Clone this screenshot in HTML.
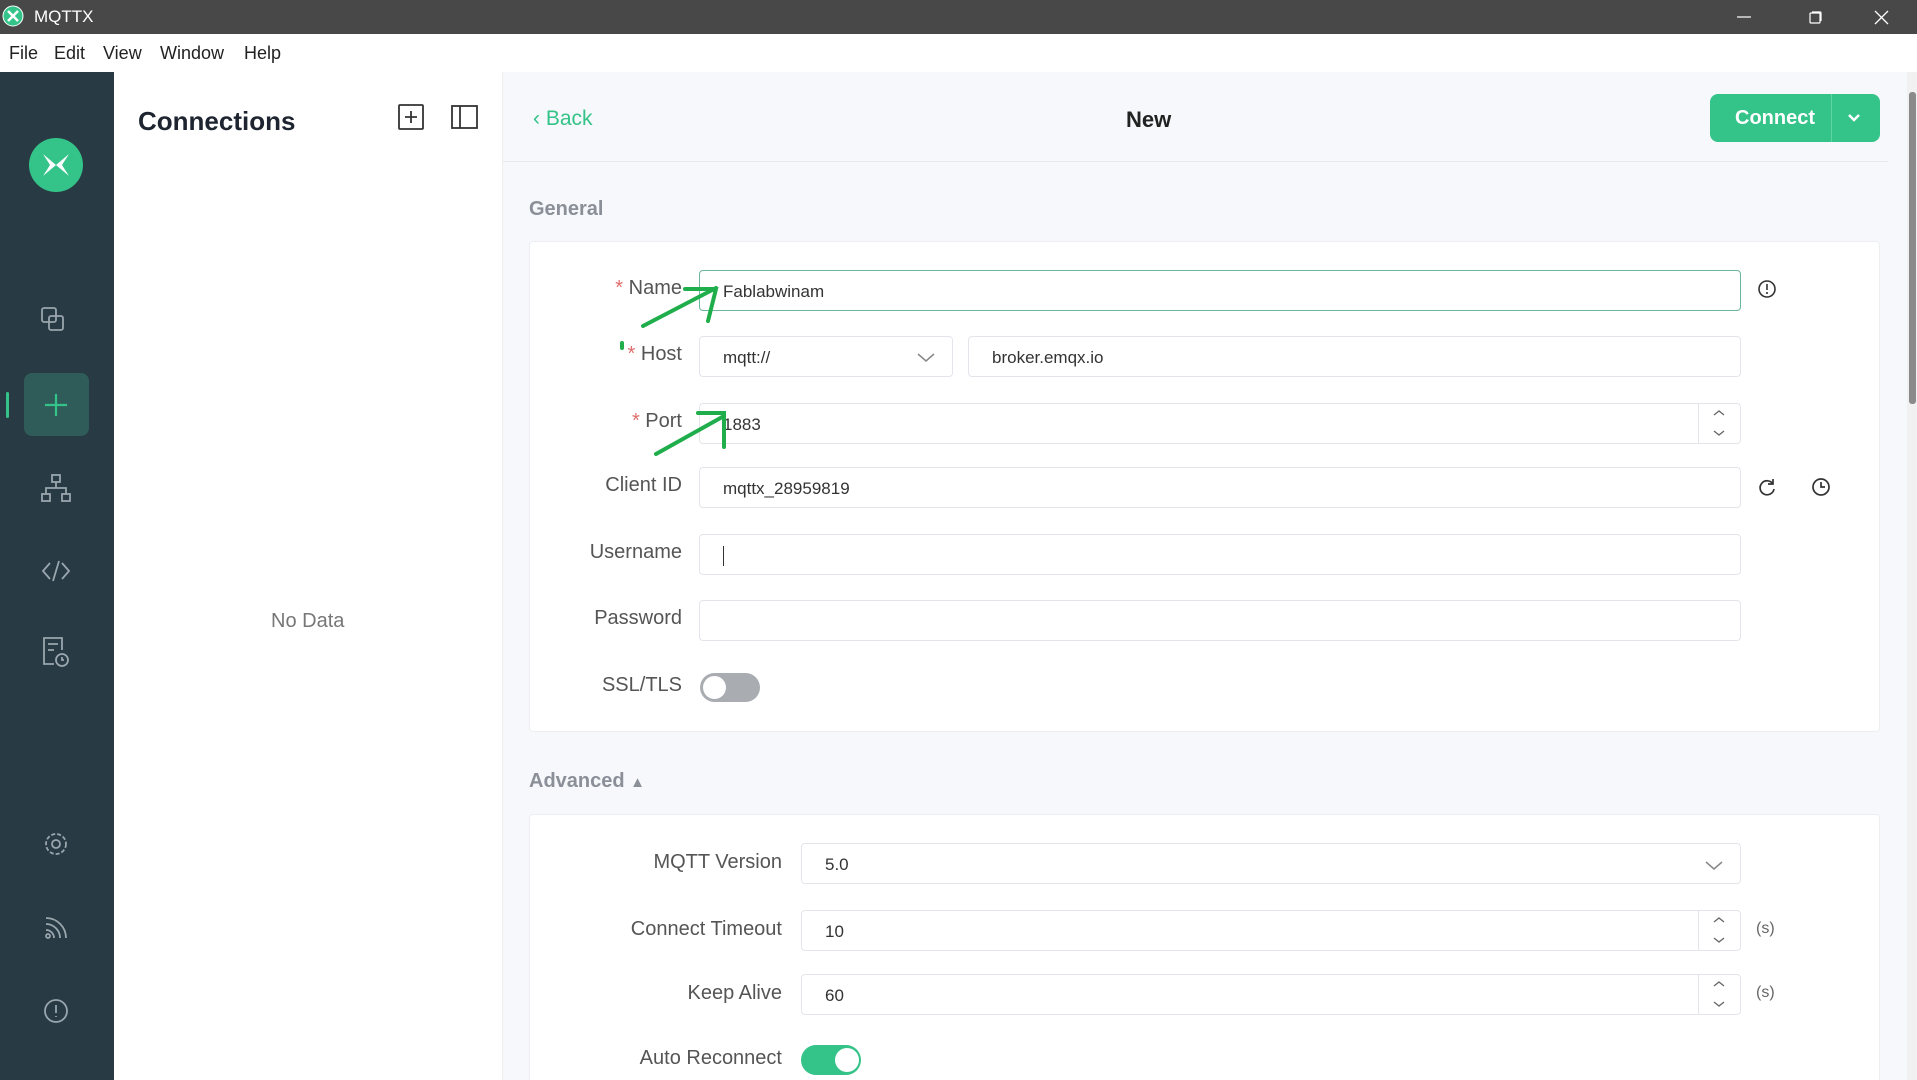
<!DOCTYPE html>
<html style="width:1917px;height:1080px;overflow:hidden"><head><meta charset="utf-8"><style>
*{box-sizing:border-box;margin:0;padding:0}
body{width:1917px;height:1080px;overflow:hidden;position:relative;background:#fff;font-family:"Liberation Sans",sans-serif;color:#333}
.a{position:absolute}
.title{left:0;top:0;width:1917px;height:34px;background:#484848;color:#fff;font-size:17px}
.menu{top:34px;left:0;width:1917px;height:38px;background:#fff;font-size:18px;color:#222}
.menu span{position:absolute;top:9px}
.side{left:0;top:72px;width:114px;height:1008px;background:#283a44}
.conn{left:114px;top:72px;width:389px;height:1008px;background:#fff;border-right:1px solid #eee}
.main{left:503px;top:72px;width:1404px;height:1008px;background:#f7f8fb;overflow:hidden}
.lbl{font-size:20px;color:#555;text-align:right;width:200px}
.inp{background:#fff;border:1px solid #e3e5ea;border-radius:4px;height:41px;font-size:17px;color:#333;padding:11px 0 0 23px}
.star{color:#e06c6c}
svg{position:absolute}
</style></head><body>
<div class="a title">
<svg style="left:2px;top:5px" width="22" height="22" viewBox="0 0 22 22"><circle cx="11" cy="11" r="10" fill="#34c388" stroke="#fff" stroke-width="1"/><path d="M6 6l5 5-5 5M16 6l-5 5 5 5" stroke="#fff" stroke-width="2.5" fill="none"/></svg>
<span class="a" style="left:34px;top:7px">MQTTX</span>
<svg style="left:1735px;top:10px" width="170" height="16"><path d="M2 7h14" stroke="#fff" stroke-width="1.2"/><rect x="127" y="4" width="10" height="10" rx="1" fill="none" stroke="#fff" stroke-width="1.2" transform="translate(-52 -1)"/><path d="M77 2h8a1 1 0 0 1 1 1v8" stroke="#fff" fill="none" stroke-width="1.2"/><path d="M140 1l13 13M153 1l-13 13" stroke="#fff" stroke-width="1.3"/></svg>
</div>
<div class="a menu"><span style="left:9px">File</span><span style="left:54px">Edit</span><span style="left:103px">View</span><span style="left:160px">Window</span><span style="left:244px">Help</span></div>
<div class="a side">
<svg style="left:29px;top:66px" width="54" height="54" viewBox="0 0 54 54"><circle cx="27" cy="27" r="27" fill="#34c388"/><path d="M14 16l13 11-13 11 7-11z M40 16l-13 11 13 11-7-11z" fill="#fff" transform="scale(-1 1) translate(-54 0)"/></svg>
<div class="a" style="left:24px;top:301px;width:65px;height:63px;background:#2f5c58;border-radius:8px"></div>
<div class="a" style="left:6px;top:320px;width:3px;height:26px;background:#34c388;border-radius:2px"></div>
<svg style="left:0;top:0" width="114" height="1008" fill="none" stroke="#9aa6ad" stroke-width="1.8">
<rect x="42" y="236" width="14" height="14" rx="2"/><rect x="49" y="244" width="14" height="14" rx="2"/>
<path d="M56 322v22M45 333h22" stroke="#34c388" stroke-width="2.2"/>
<rect x="52" y="403" width="8" height="7"/><rect x="42" y="422" width="8" height="7"/><rect x="62" y="422" width="8" height="7"/><path d="M56 410v6M46 422v-6h20v6"/>
<path d="M50 491l-7 8 7 8M62 491l7 8-7 8M59 489l-6 20"/>
<path d="M62 578v-12h-18v26h10M48 572h10M48 578h6"/><circle cx="62" cy="588" r="6"/><path d="M62 585v3h2"/>
<circle cx="56" cy="772" r="4"/><circle cx="56" cy="772" r="10" stroke-dasharray="4 2"/>
<path d="M46 852a14 14 0 0 1 14 14M46 846a20 20 0 0 1 20 20M46 858a8 8 0 0 1 8 8"/><circle cx="48" cy="864" r="2"/>
<circle cx="56" cy="939" r="11"/><path d="M56 933v8M56 944v1"/>
</svg>
</div>
<div class="a conn">
<div class="a" style="left:24px;top:34px;font-size:26px;font-weight:bold;color:#1e2530">Connections</div>
<svg style="left:270px;top:31px" width="100" height="28" fill="none" stroke="#333" stroke-width="1.8"><rect x="15" y="2" width="24" height="24" rx="1"/><path d="M27 8v12M21 14h12"/><rect x="68" y="3" width="25" height="22"/><path d="M76 3v22"/></svg>
<div class="a" style="left:157px;top:538px;font-size:20px;color:#777">No Data</div>
</div>
<div class="a main">
<div class="a" style="left:0;top:89px;width:1385px;height:1px;background:#e7e9ee"></div>
<div class="a" style="left:30px;top:35px;font-size:21px;color:#34c388">&#8249; Back</div>
<div class="a" style="left:623px;top:35px;font-size:22px;font-weight:bold;color:#222">New</div>
<div class="a" style="left:1207px;top:22px;width:170px;height:48px;background:#34c388;border-radius:8px;color:#fff;font-weight:bold;font-size:20px"><span class="a" style="left:25px;top:13px">Connect</span><div class="a" style="left:121px;top:0;width:1px;height:48px;background:#5fd4a3"></div><svg style="left:136px;top:18px" width="16" height="12"><path d="M3 3l5 5 5-5" stroke="#fff" stroke-width="2.5" fill="none"/></svg></div>
<div class="a" style="left:26px;top:126px;font-size:20px;font-weight:bold;color:#8a8f98">General</div>
<div class="a" style="left:26px;top:169px;width:1351px;height:491px;background:#fff;border:1px solid #eceef2;border-radius:4px"></div>
<div class="a" style="left:26px;top:698px;font-size:20px;font-weight:bold;color:#8a8f98">Advanced <span style="font-size:15px">&#9650;</span></div>
<div class="a" style="left:26px;top:742px;width:1351px;height:300px;background:#fff;border:1px solid #eceef2;border-radius:4px"></div>
</div>
<div class="a lbl" style="left:482px;top:277px"><span class="star">*</span> Name</div>
<div class="a inp" style="left:699px;top:270px;width:1042px;border-color:#6bb59a">Fablabwinam</div>
<svg style="left:1757px;top:279px" width="20" height="20" fill="none" stroke="#333" stroke-width="1.6"><circle cx="10" cy="10" r="8"/><path d="M10 5v6M10 13v2"/></svg>
<div class="a lbl" style="left:482px;top:343px"><span class="star">*</span> Host</div>
<div class="a inp" style="left:699px;top:336px;width:254px">mqtt://</div>
<svg style="left:916px;top:351px" width="20" height="12"><path d="M2 3l8 7 8-7" stroke="#888" stroke-width="1.5" fill="none"/></svg>
<div class="a inp" style="left:968px;top:336px;width:773px">broker.emqx.io</div>
<div class="a lbl" style="left:482px;top:410px"><span class="star">*</span> Port</div>
<div class="a inp" style="left:699px;top:403px;width:1042px">1883</div>
<div class="a" style="left:1698px;top:404px;width:1px;height:39px;background:#e3e5ea"></div>
<svg style="left:1710px;top:406px" width="18" height="34"><path d="M4 9l5-4 5 4M4 25l5 4 5-4" stroke="#666" stroke-width="1.3" fill="none"/></svg>
<div class="a lbl" style="left:482px;top:474px">Client ID</div>
<div class="a inp" style="left:699px;top:467px;width:1042px">mqttx_28959819</div>
<svg style="left:1756px;top:475px" width="80" height="24" fill="none" stroke="#333" stroke-width="1.7"><path d="M17 9a7 7 0 1 0 1 5M17 4v5h-5"/><circle cx="65" cy="12" r="8"/><path d="M65 7v5h4"/></svg>
<div class="a lbl" style="left:482px;top:541px">Username</div>
<div class="a inp" style="left:699px;top:534px;width:1042px"><span style="border-left:1.5px solid #333;display:inline-block;height:20px"></span></div>
<div class="a lbl" style="left:482px;top:607px">Password</div>
<div class="a inp" style="left:699px;top:600px;width:1042px"></div>
<div class="a lbl" style="left:482px;top:674px">SSL/TLS</div>
<div class="a" style="left:700px;top:673px;width:60px;height:29px;background:#a9acb1;border-radius:15px"><div class="a" style="left:3px;top:3px;width:23px;height:23px;background:#fff;border-radius:50%"></div></div>
<div class="a lbl" style="left:582px;top:851px">MQTT Version</div>
<div class="a inp" style="left:801px;top:843px;width:940px">5.0</div>
<svg style="left:1704px;top:859px" width="20" height="12"><path d="M2 3l8 7 8-7" stroke="#888" stroke-width="1.5" fill="none"/></svg>
<div class="a lbl" style="left:582px;top:918px">Connect Timeout</div>
<div class="a inp" style="left:801px;top:910px;width:940px">10</div>
<div class="a" style="left:1698px;top:911px;width:1px;height:39px;background:#e3e5ea"></div>
<svg style="left:1710px;top:913px" width="18" height="34"><path d="M4 9l5-4 5 4M4 25l5 4 5-4" stroke="#666" stroke-width="1.3" fill="none"/></svg>
<div class="a" style="left:1756px;top:920px;font-size:16px;color:#666">(s)</div>
<div class="a lbl" style="left:582px;top:982px">Keep Alive</div>
<div class="a inp" style="left:801px;top:974px;width:940px">60</div>
<div class="a" style="left:1698px;top:975px;width:1px;height:39px;background:#e3e5ea"></div>
<svg style="left:1710px;top:977px" width="18" height="34"><path d="M4 9l5-4 5 4M4 25l5 4 5-4" stroke="#666" stroke-width="1.3" fill="none"/></svg>
<div class="a" style="left:1756px;top:984px;font-size:16px;color:#666">(s)</div>
<div class="a lbl" style="left:582px;top:1047px">Auto Reconnect</div>
<div class="a" style="left:801px;top:1045px;width:60px;height:30px;background:#34c388;border-radius:15px"><div class="a" style="left:34px;top:3px;width:24px;height:24px;background:#fff;border-radius:50%"></div></div>
<svg style="left:0;top:0" width="1917" height="1080" fill="none" stroke="#1fae4b" stroke-width="4" stroke-linecap="round">
<path d="M643 326l73-38M685 289h31l-8 32"/>
<path d="M656 454l68-38M698 413h26v34"/>
<path d="M622 343v5"/>
</svg>
<div class="a" style="left:1907px;top:72px;width:10px;height:1008px;background:#f1f1f1"></div>
<div class="a" style="left:1909px;top:92px;width:7px;height:312px;background:#8a8a8a;border-radius:3px"></div>
</body></html>
